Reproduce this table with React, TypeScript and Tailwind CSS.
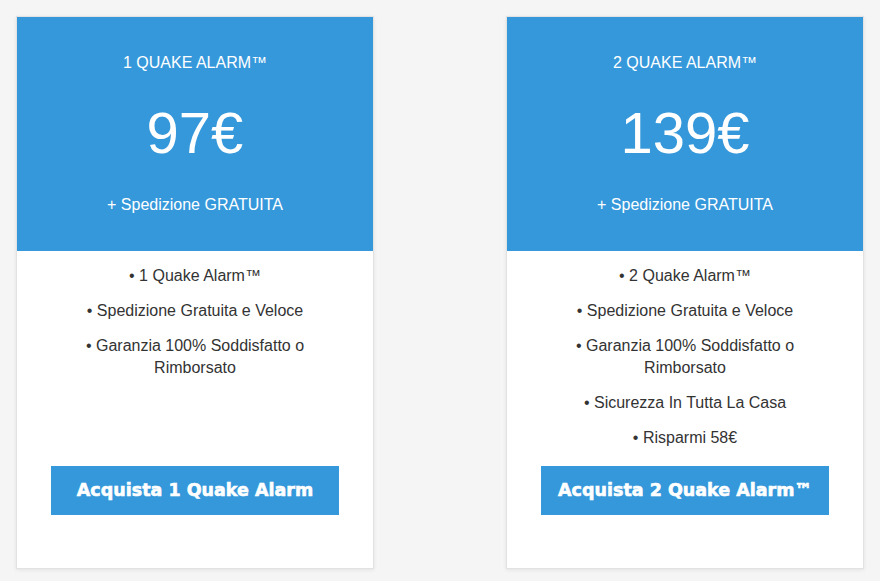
const PLANS = [
  {
    title: "1 QUAKE ALARM™",
    price: "97€",
    features: ["1 Quake Alarm™", "Spedizione Gratuita e Veloce", "Garanzia 100% Soddisfatto o Rimborsato"],
    cta: "Acquista 1 Quake Alarm",
  },
  {
    title: "2 QUAKE ALARM™",
    price: "139€",
    features: [
      "2 Quake Alarm™",
      "Spedizione Gratuita e Veloce",
      "Garanzia 100% Soddisfatto o Rimborsato",
      "Sicurezza In Tutta La Casa",
      "Risparmi 58€",
    ],
    cta: "Acquista 2 Quake Alarm™",
  },
];

type Plan = (typeof PLANS)[number];

function PlanCard({ plan }: { plan: Plan }) {
  return (
    <div className="flex h-[553px] flex-col border border-[#e2e2e2] bg-white shadow-[0_1px_4px_rgba(0,0,0,0.08)]">
      <div className="flex h-[234px] flex-col items-center bg-[#3598db] pt-[36px] text-white">
        <p className="text-[16px] leading-[20px]">{plan.title}</p>
        <p className="mt-[30px] text-[58px] leading-[60px]">{plan.price}</p>
        <p className="mt-[32px] text-[16px] leading-[20px]">+ Spedizione GRATUITA</p>
      </div>
      <ul className="flex h-[215px] flex-col items-center gap-[13px] px-[50px] pt-[14px] text-center text-[16px] leading-[22px] text-[#333]">
        {plan.features.map((f) => (
          <li key={f}>• {f}</li>
        ))}
      </ul>
      <div className="flex justify-center">
        <button
          type="button"
          className="h-[49px] w-[288px] bg-[#3598db] text-[17.5px] font-bold text-white [font-family:'DejaVu_Sans',sans-serif] [-webkit-text-stroke:0.6px_white]"
        >
          {plan.cta}
        </button>
      </div>
    </div>
  );
}

export default function App() {
  return (
    <div className="h-[581px] w-[880px] bg-[#f5f5f5] px-4 pt-4 font-['Liberation_Sans',Arial,sans-serif]">
      <div className="grid grid-cols-2 gap-[132px]">
        {PLANS.map((plan) => (
          <PlanCard key={plan.title} plan={plan} />
        ))}
      </div>
    </div>
  );
}
